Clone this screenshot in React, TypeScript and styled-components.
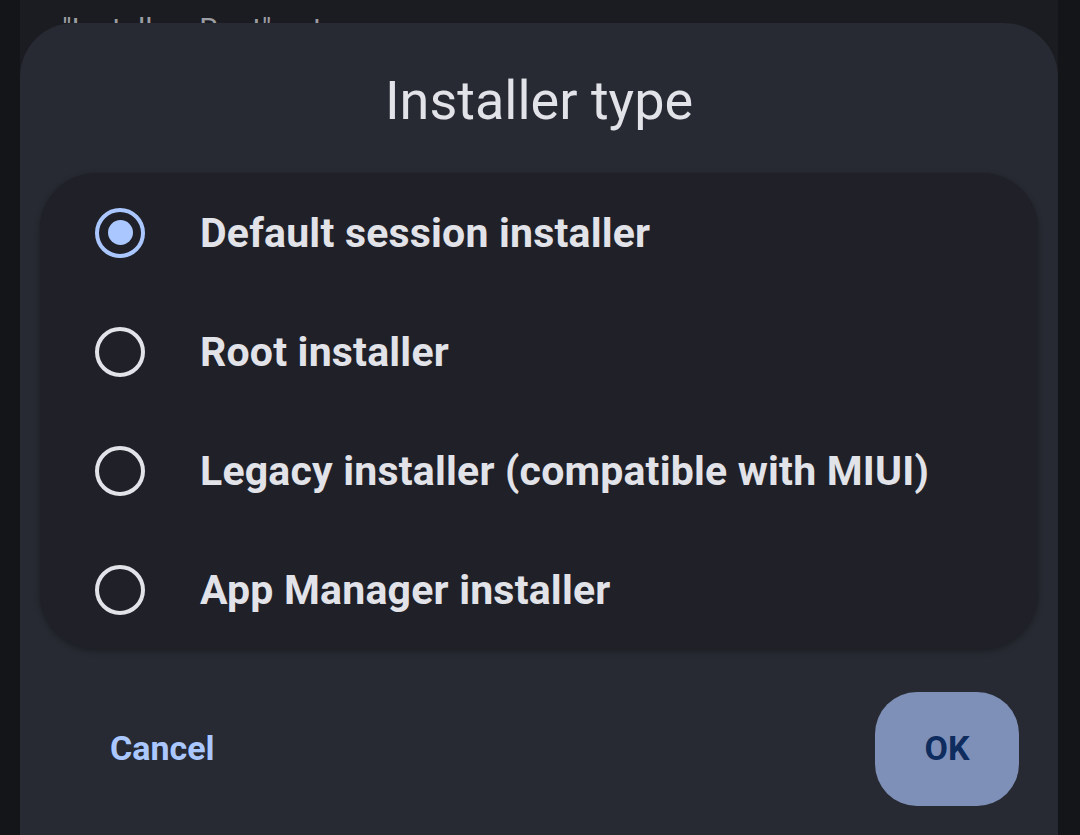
import React, { useState } from 'react';
import styled, { createGlobalStyle } from 'styled-components';

const GlobalStyle = createGlobalStyle`
  html, body {
    margin: 0;
    padding: 0;
    background: #141519;
    font-family: Roboto, "Noto Sans", sans-serif;
    overflow: hidden;
  }
`;

const Screen = styled.div`
  display: flex;
  height: 835px;
  padding: 0 22px 0 20px;
  background: #141519;
  overflow: hidden;
`;

const Surface = styled.div`
  flex: 1;
  display: flex;
  flex-direction: column;
  background: #1b1c21;
`;

// the list item behind the dialog, mostly hidden by it
const PeekLine = styled.div`
  height: 23px;
  overflow: hidden;
  box-sizing: border-box;
  padding: 14px 0 0 42px;
  font-size: 30px;
  line-height: 1;
  color: #9c9da3;
  white-space: nowrap;
`;

const Dialog = styled.div`
  flex: 1;
  display: flex;
  flex-direction: column;
  padding: 0 20px;
  background: #272a32;
  border-radius: 54px 54px 0 0;
`;

const Title = styled.h2`
  margin: 0;
  height: 150px;
  display: flex;
  align-items: center;
  justify-content: center;
  padding-top: 4px;
  box-sizing: border-box;
  font-size: 54px;
  font-weight: 400;
  color: #e2e2e9;
`;

const OptionCard = styled.div`
  display: flex;
  flex-direction: column;
  background: #1f2028;
  border-radius: 56px;
  box-shadow: 0 2px 6px rgba(0, 0, 0, 0.3);
`;

const OptionRow = styled.label`
  display: flex;
  align-items: center;
  gap: 55px;
  height: 119px;
  padding-left: 55px;
  cursor: pointer;
`;

const Radio = styled.span<{ $checked: boolean }>`
  width: 50px;
  height: 50px;
  box-sizing: border-box;
  border-radius: 50%;
  border: 4.5px solid ${p => (p.$checked ? '#aac7ff' : '#e2e2e9')};
  display: flex;
  align-items: center;
  justify-content: center;

  &::after {
    content: '';
    width: 25px;
    height: 25px;
    border-radius: 50%;
    background: #aac7ff;
    display: ${p => (p.$checked ? 'block' : 'none')};
  }
`;

const OptionLabel = styled.span`
  font-size: 41px;
  font-weight: 700;
  color: #e2e2e9;
  letter-spacing: 0.2px;
`;

const Footer = styled.div`
  display: flex;
  align-items: center;
  justify-content: space-between;
  padding: 43px 19px 0 70px;
`;

const TextButton = styled.button`
  border: none;
  background: none;
  padding: 0 0 3px;
  font-family: inherit;
  font-size: 34px;
  font-weight: 700;
  color: #aac7ff;
`;

const FilledButton = styled.button`
  width: 144px;
  height: 114px;
  border: none;
  border-radius: 42px;
  padding: 0 0 3px;
  background: #7e90b8;
  font-family: inherit;
  font-size: 34px;
  font-weight: 700;
  color: #0e2c5e;
`;

const options = [
  'Default session installer',
  'Root installer',
  'Legacy installer (compatible with MIUI)',
  'App Manager installer',
];

export default function App() {
  const [selected, setSelected] = useState(0);

  return (
    <>
      <GlobalStyle />
      <Screen>
        <Surface>
          <PeekLine>"Install as Root" note</PeekLine>
          <Dialog>
            <Title>Installer type</Title>
            <OptionCard>
              {options.map((label, i) => (
                <OptionRow key={label} onClick={() => setSelected(i)}>
                  <Radio $checked={selected === i} />
                  <OptionLabel>{label}</OptionLabel>
                </OptionRow>
              ))}
            </OptionCard>
            <Footer>
              <TextButton>Cancel</TextButton>
              <FilledButton>OK</FilledButton>
            </Footer>
          </Dialog>
        </Surface>
      </Screen>
    </>
  );
}
